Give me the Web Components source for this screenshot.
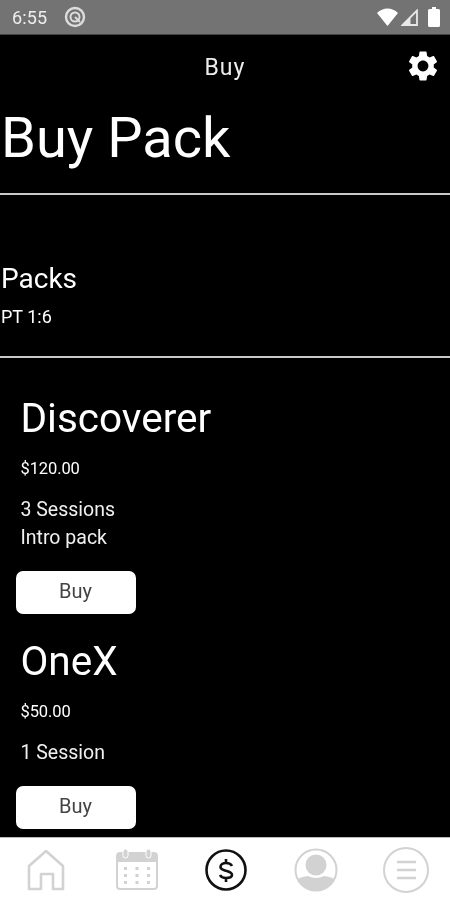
<!DOCTYPE html>
<html><head><meta charset="utf-8"><style>
html,body{margin:0;padding:0;background:#000}
body{width:450px;height:900px;overflow:hidden;font-family:Roboto,sans-serif;color:#fff}
app-shell{height:900px}
</style></head><body>
<app-shell>
<status-bar></status-bar>
<title-bar>Buy</title-bar>
<main-view>
<page-title>Buy Pack</page-title>
<pack-filter></pack-filter>
<pack-list>
<pack-card name="Discoverer" price="$120.00"><div>3 Sessions</div><div>Intro pack</div></pack-card>
<pack-card name="OneX" price="$50.00"><div>1 Session</div></pack-card>
</pack-list>
</main-view>
<tab-bar></tab-bar>
</app-shell>
<script>
function def(name,html){customElements.define(name,class extends HTMLElement{constructor(){super();this.attachShadow({mode:'open'}).innerHTML=html;}
connectedCallback(){this.shadowRoot.querySelectorAll('[data-attr]').forEach(e=>{e.textContent=this.getAttribute(e.dataset.attr)})}})}
def('app-shell',`<style>:host{display:flex;flex-direction:column;width:450px;background:#000;filter:blur(.6px)}</style><slot></slot>`);
def('status-bar',`<style>:host{display:flex;align-items:center;height:34px;background:#737373;border-bottom:1px solid #444;color:#eee;box-sizing:content-box}
.t{font-size:18px;margin-left:12px;width:41px;letter-spacing:.1px}svg{display:block}.r{margin-left:auto;margin-right:10px;display:flex;align-items:center;gap:4px}</style>
<span class="t">6:55</span>
<svg style="margin-left:11px" width="22" height="22" viewBox="0 0 22 22" fill="none" stroke="#ddd"><circle cx="11" cy="11" r="9" stroke-width="2.400"/><circle cx="11" cy="11" r="4.500" stroke-width="2"/><path d="M11 11l5 5" stroke-width="2"/></svg>
<div class="r"><svg width="21" height="18" viewBox="0 0 21 18"><path d="M0 5C6 -1 15 -1 21 5L10.500 18Z" fill="#fff"/></svg>
<svg style="margin-left:-1px;margin-top:1px" width="17" height="17" viewBox="0 0 17 17"><path d="M16 1.500V16H1.500Z" fill="none" stroke="#e8e8e8" stroke-width="1.800"/><path d="M9.500 16V8L1.500 16Z" fill="#e8e8e8"/></svg>
<svg style="margin-left:6px" width="12" height="20" viewBox="0 0 12 20"><path d="M4 0H8V2H10.500Q12 2 12 3.500V18.500Q12 20 10.500 20H1.500Q0 20 0 18.500V3.500Q0 2 1.500 2H4Z" fill="#fff"/></svg></div>`);
def('title-bar',`<style>:host{display:flex;align-items:center;justify-content:center;position:relative;height:64px;font-size:23px;letter-spacing:1.100px;color:#ececec}
svg{position:absolute;left:405px;top:13px}</style><span><slot></slot></span>
<svg width="36" height="36" viewBox="0 0 24 24"><path fill="#fff" d="M19.140 12.940c.04-.3.060-.61.060-.94 0-.32-.02-.64-.07-.94l2.030-1.580c.18-.14.230-.41.120-.61l-1.920-3.320c-.12-.22-.37-.29-.59-.22l-2.390.96c-.5-.38-1.030-.7-1.620-.94l-.36-2.540c-.04-.24-.24-.41-.48-.41h-3.840c-.24 0-.43.170-.47.410l-.36 2.540c-.59.24-1.130.57-1.620.94l-2.390-.96c-.22-.08-.47 0-.59.22L2.740 8.870c-.12.210-.08.470.12.610l2.030 1.580c-.05.3-.09.63-.09.94s.02.640.07.94l-2.030 1.580c-.18.140-.23.410-.12.610l1.920 3.320c.12.220.37.290.59.220l2.390-.96c.5.380 1.030.7 1.620.94l.36 2.540c.05.240.24.410.48.410h3.840c.24 0 .44-.17.470-.41l.36-2.540c.59-.24 1.130-.56 1.620-.94l2.390.96c.22.080.47 0 .59-.22l1.920-3.320c.12-.22.070-.47-.12-.61l-2.010-1.580zM12 15.600c-1.980 0-3.600-1.620-3.600-3.600s1.620-3.600 3.600-3.600 3.600 1.620 3.600 3.600-1.620 3.600-3.600 3.600z"/></svg>`);
def('main-view',`<style>:host{display:block;flex:1;min-height:0;overflow:hidden}</style><slot></slot>`);
def('page-title',`<style>:host{display:block;height:96px;box-sizing:border-box;border-bottom:2px solid #c8c8c8;font-size:56px;line-height:78px;padding-left:1px}</style><slot></slot>`);
def('pack-filter',`<style>:host{display:block;height:163px;box-sizing:border-box;border-bottom:2px solid #c8c8c8;padding:68px 0 0 1px}
.a{font-size:28px;line-height:32px}.b{font-size:18px;line-height:20px;margin-top:12px}</style><div class="a">Packs</div><div class="b">PT 1:6</div>`);
def('pack-list',`<style>:host{display:flex;flex-direction:column;gap:23px;padding-top:36px}</style><slot></slot>`);
def('pack-card',`<style>:host{display:block;padding:0 0 0 20.500px}
h2{margin:0;font-weight:400;font-size:40.500px;line-height:48px}
.p{font-size:16.500px;line-height:20px;margin-top:17px;letter-spacing:-.1px}
.d{font-size:19.500px;line-height:28px;margin-top:17px;color:#f0f0f0}
button{display:block;width:120px;height:43px;margin:19px 0 0 -5px;background:#fff;border:0;border-radius:7px;color:#444;font:20px Roboto,sans-serif;padding:0 0 3px}</style>
<h2 data-attr="name"></h2><div class="p" data-attr="price"></div><div class="d"><slot></slot></div><button>Buy</button>`);
def('tab-bar',`<style>:host{display:flex;height:63px;background:#fff;border-top:1px solid #bbb;box-sizing:border-box;position:relative}
svg{position:absolute}</style>
<svg style="left:27px;top:11px" width="38" height="42" viewBox="0 0 38 42" fill="none" stroke="#d2d2d2" stroke-width="2.600" stroke-linejoin="round"><path d="M2 17L19 2 36 17V40H26V25H14V40H2Z"/></svg>
<svg style="left:116px;top:11px" width="42" height="42" viewBox="0 0 42 42"><path d="M4 4H38Q41 4 41 7V37Q41 40 38 40H4Q1 40 1 37V7Q1 4 4 4Z" fill="#fff" stroke="#d2d2d2" stroke-width="2"/><path d="M1 7Q1 4 4 4H38Q41 4 41 7V13H1Z" fill="#d2d2d2"/><rect x="7" y="0" width="5" height="9" rx="2.500" fill="#d2d2d2" stroke="#fff"/><rect x="30" y="0" width="5" height="9" rx="2.500" fill="#d2d2d2" stroke="#fff"/><g fill="#d2d2d2"><rect x="8" y="18" width="3" height="3"/><rect x="19.500" y="18" width="3" height="3"/><rect x="31" y="18" width="3" height="3"/><rect x="8" y="25" width="3" height="3"/><rect x="19.500" y="25" width="3" height="3"/><rect x="31" y="25" width="3" height="3"/><rect x="8" y="32" width="3" height="3"/><rect x="19.500" y="32" width="3" height="3"/><rect x="31" y="32" width="3" height="3"/></g></svg>
<svg style="left:205px;top:11px" width="42" height="42" viewBox="0 0 42 42" fill="none" stroke="#111"><circle cx="21" cy="21" r="19.500" stroke-width="2.600"/><path d="M27 17C26 15 24 14 21 14 18 14 15.500 15.500 15.500 18 15.500 20.500 18.500 21 21 21.800 23.500 22.500 27 23.500 27 25.800 27 28 24.500 29 21 29 18.500 29 16 28 15 26M21 10V14M21 29V33" stroke-width="2.600"/></svg>
<svg style="left:294px;top:10px" width="44" height="44" viewBox="0 0 44 44"><defs><clipPath id="c"><circle cx="22" cy="22" r="21"/></clipPath></defs><circle cx="22" cy="22" r="20.500" fill="#fff" stroke="#d2d2d2" stroke-width="2"/><circle cx="22" cy="17" r="10.500" fill="#d2d2d2"/><path clip-path="url(#c)" d="M0 46V35Q3 29 14 28 22 32 30 28 41 29 44 35V46Z" fill="#d2d2d2"/></svg>
<svg style="left:383px;top:9px" width="46" height="46" viewBox="0 0 46 46" fill="none" stroke="#d2d2d2"><circle cx="23" cy="23" r="22" stroke-width="2"/><path d="M14 15H33M14 23H33M14 31H33" stroke-width="2.400"/></svg>`);
</script>
</body></html>
